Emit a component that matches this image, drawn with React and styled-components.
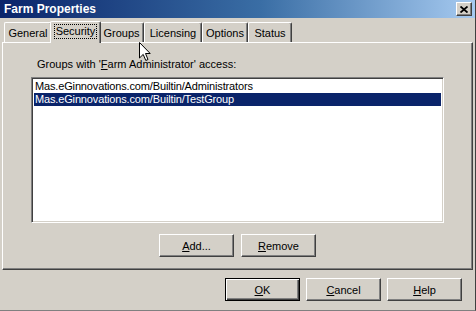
import React from "react";
import styled, { createGlobalStyle, css } from "styled-components";

const GlobalStyle = createGlobalStyle`
  html, body {
    margin: 0;
    padding: 0;
    background: #d4d0c8;
  }
  * {
    box-sizing: border-box;
  }
`;

const raised = css`
  border-top: 1px solid #ffffff;
  border-left: 1px solid #ffffff;
  border-right: 1px solid #404040;
  border-bottom: 1px solid #404040;
  box-shadow: inset -1px -1px 0 #808080;
`;

const Window = styled.div`
  position: relative;
  width: 476px;
  height: 311px;
  background: #d4d0c8;
  border-right: 1px solid #404040;
  border-bottom: 1px solid #808080;
  font-family: "Liberation Sans", Arial, sans-serif;
  font-size: 11px;
  color: #000;
  overflow: hidden;
`;

const TitleBar = styled.div`
  display: flex;
  align-items: center;
  justify-content: space-between;
  height: 18px;
  padding: 0 3px 0 4px;
  background: linear-gradient(to right, #0a246a 0%, #3a6ea5 55%, #a6caf0 100%);
`;

const Title = styled.div`
  color: #fff;
  font-weight: bold;
  font-size: 12px;
`;

const CloseButton = styled.div`
  display: flex;
  align-items: center;
  justify-content: center;
  width: 16px;
  height: 14px;
  background: #d4d0c8;
  ${raised}
`;

const Content = styled.div`
  padding: 0 2px;
`;

const TabStrip = styled.div`
  display: flex;
  align-items: flex-end;
  height: 24px;
  padding-left: 2px;
`;

const Tab = styled.div`
  position: relative;
  display: flex;
  align-items: center;
  justify-content: center;
  width: ${(p) => p.$w}px;
  height: ${(p) => (p.$active ? 22 : 20)}px;
  margin: 0 ${(p) => (p.$active ? -2 : 0)}px ${(p) => (p.$active ? -1 : 0)}px;
  padding-bottom: ${(p) => (p.$active ? 2 : 0)}px;
  background: #d4d0c8;
  border-top: 1px solid #fff;
  border-left: 1px solid #fff;
  border-right: 1px solid #404040;
  border-top-left-radius: 2px;
  border-top-right-radius: 2px;
  box-shadow: inset -1px 0 0 #808080;
  z-index: ${(p) => (p.$active ? 2 : 1)};
`;

const FocusText = styled.span`
  padding: 0 1px;
  outline: 1px dotted #000;
  outline-offset: 0;
  line-height: 13px;
`;

const Panel = styled.div`
  display: flex;
  flex-direction: column;
  height: 228px;
  padding: 15px 28px 0 28px;
  ${raised}
`;

const Label = styled.div`
  padding-left: 6px;
  line-height: 13px;
  margin-bottom: 6px;
`;

const ListBox = styled.div`
  height: 146px;
  background: #fff;
  border-top: 1px solid #808080;
  border-left: 1px solid #808080;
  border-right: 1px solid #fff;
  border-bottom: 1px solid #fff;
  box-shadow: inset 1px 1px 0 #404040, inset -1px -1px 0 #d4d0c8;
  padding: 2px 2px;
`;

const ListItem = styled.div`
  height: 13px;
  line-height: 13px;
  padding-left: 1px;
  white-space: nowrap;
  letter-spacing: -0.15px;
  background: ${(p) => (p.$selected ? "#0a246a" : "transparent")};
  color: ${(p) => (p.$selected ? "#fff" : "#000")};
`;

const ButtonRow = styled.div`
  display: flex;
  justify-content: ${(p) => p.$align || "center"};
  gap: ${(p) => p.$gap || 7}px;
  padding: ${(p) => p.$pad || "11px 0 0"};
`;

const Button = styled.div`
  display: flex;
  align-items: center;
  justify-content: center;
  width: 75px;
  height: 23px;
  background: #d4d0c8;
  ${(p) =>
    p.$default
      ? css`
          border: 1px solid #000;
          box-shadow: inset 1px 1px 0 #fff, inset -1px -1px 0 #404040,
            inset -2px -2px 0 #808080;
        `
      : raised}
`;

const Mn = styled.span`
  text-decoration: underline;
`;

const Cursor = styled.svg`
  position: absolute;
  left: 139px;
  top: 42px;
`;

const tabs = [
  { name: "General", w: 48 },
  { name: "Security", w: 51, active: true },
  { name: "Groups", w: 45 },
  { name: "Licensing", w: 58 },
  { name: "Options", w: 46 },
  { name: "Status", w: 44 },
];

const groups = [
  "Mas.eGinnovations.com/Builtin/Administrators",
  "Mas.eGinnovations.com/Builtin/TestGroup",
];

export default function App() {
  return (
    <>
      <GlobalStyle />
      <Window>
        <TitleBar>
          <Title>Farm Properties</Title>
          <CloseButton>
            <svg width="8" height="7" viewBox="0 0 8 7">
              <path d="M0.5 0.5 L7.5 6.5 M7.5 0.5 L0.5 6.5" stroke="#000" strokeWidth="1.8" />
            </svg>
          </CloseButton>
        </TitleBar>
        <Content>
          <TabStrip>
            {tabs.map((t) => (
              <Tab key={t.name} $w={t.w} $active={t.active}>
                {t.active ? <FocusText>{t.name}</FocusText> : t.name}
              </Tab>
            ))}
          </TabStrip>
          <Panel>
            <Label>
              Groups with '<Mn>F</Mn>arm Administrator' access:
            </Label>
            <ListBox>
              {groups.map((g, i) => (
                <ListItem key={g} $selected={i === 1}>
                  {g}
                </ListItem>
              ))}
            </ListBox>
            <ButtonRow>
              <Button>
                <span>
                  <Mn>A</Mn>dd...
                </span>
              </Button>
              <Button>
                <span>
                  <Mn>R</Mn>emove
                </span>
              </Button>
            </ButtonRow>
          </Panel>
          <ButtonRow $align="flex-end" $gap={6} $pad="8px 11px 0 0">
            <Button $default>
              <span>
                <Mn>O</Mn>K
              </span>
            </Button>
            <Button>
              <span>
                <Mn>C</Mn>ancel
              </span>
            </Button>
            <Button>
              <span>
                <Mn>H</Mn>elp
              </span>
            </Button>
          </ButtonRow>
        </Content>
        <Cursor width="12" height="20" viewBox="0 0 12 20">
          <path
            d="M0.5 0.5 L0.5 16 L4.2 12.4 L6.8 18.5 L9 17.5 L6.5 11.5 L11.2 11.5 Z"
            fill="#fff"
            stroke="#000"
            strokeWidth="1"
          />
        </Cursor>
      </Window>
    </>
  );
}
